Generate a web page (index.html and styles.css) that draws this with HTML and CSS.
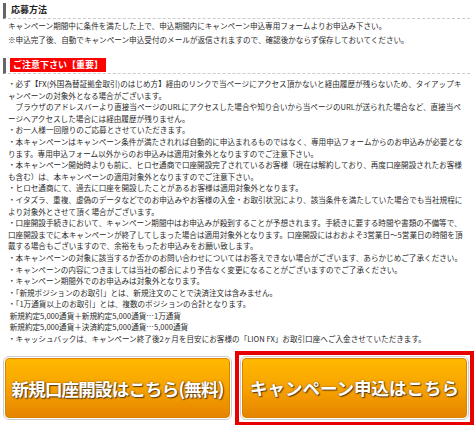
FILE: index.html
```html
<!DOCTYPE html>
<html lang="ja">
<head>
  <meta charset="UTF-8" />
  <title>キャンペーン 応募方法</title>
  <link rel="stylesheet" href="styles.css">
</head>
<body>

  <div class="section">
    <h3 class="ttl">応募方法</h3>
    <p class="lead">
      キャンペーン期間中に条件を満たした上で、申込期間内にキャンペーン申込専用フォームよりお申込み下さい。<br>
      ※申込完了後、自動でキャンペーン申込受付のメールが返信されますので、確認後かならず保存しておいてください。
    </p>
  </div>

  <div class="section">
    <h3 class="ttl"><span class="alert">ご注意下さい【重要】</span></h3>
    <ul class="notes">
      <li>・必ず【FX(外国為替証拠金取引)のはじめ方】経由のリンクで当ページにアクセス頂かないと経由履歴が残らないため、タイアップキ<br>ャンペーンの対象外となる場合がございます。<br>　ブラウザのアドレスバーより直接当ページのURLにアクセスした場合や知り合いから当ページのURLが送られた場合など、直接当ペ<br>ージへアクセスした場合には経由履歴が残りません。</li>
      <li>・お一人様一回限りのご応募とさせていただきます。</li>
      <li>・本キャンペーンはキャンペーン条件が満たされれば自動的に申込まれるものではなく、専用申込フォームからのお申込みが必要とな<br>ります。専用申込フォーム以外からのお申込みは適用対象外となりますのでご注意下さい。</li>
      <li>・本キャンペーン開始時よりも前に、ヒロセ通商で口座開設完了されているお客様（現在は解約しており、再度口座開設されたお客様<br>も含む）は、本キャンペーンの適用対象外となりますのでご注意下さい。</li>
      <li>・ヒロセ通商にて、過去に口座を開設したことがあるお客様は適用対象外となります。</li>
      <li>・イタズラ、重複、虚偽のデータなどでのお申込みやお客様の入金・お取引状況により、該当条件を満たしていた場合でも当社規程に<br>より対象外とさせて頂く場合がございます。</li>
      <li>・口座開設手続きにおいて、キャンペーン期間中はお申込みが殺到することが予想されます。手続きに要する時間や書類の不備等で、<br>口座開設までに本キャンペーンが終了してしまった場合は適用対象外となります。口座開設にはおおよそ3営業日～5営業日の時間を頂<br>戴する場合もございますので、余裕をもったお申込みをお願い致します。</li>
      <li>・本キャンペーンの対象に該当するか否かのお問い合わせについてはお答えできない場合がございます、あらかじめご了承ください。</li>
      <li>・キャンペーンの内容につきましては当社の都合により予告なく変更になることがございますのでご了承ください。</li>
      <li>・キャンペーン期間外でのお申込みは対象外となります。</li>
      <li>・「新規ポジションのお取引」とは、新規注文のことで決済注文は含みません。</li>
      <li>・「1万通貨以上のお取引」とは、複数のポジションの合計となります。<br>
        &nbsp;新規約定5,000通貨＋新規約定5,000通貨…1万通貨<br>
        &nbsp;新規約定5,000通貨＋決済約定5,000通貨…5,000通貨</li>
      <li>・キャッシュバックは、キャンペーン終了後2ヶ月を目安にお客様の「LION FX」お取引口座へご入金させていただきます。</li>
    </ul>
  </div>

  <div class="btns">
    <a class="btn-wrap" href="#">
      <span class="btn btn-open">新規口座開設はこちら(無料)</span>
    </a>
    <div class="btn-focus">
      <a class="btn-wrap" href="#">
        <span class="btn">キャンペーン申込はこちら</span>
      </a>
    </div>
  </div>

</body>
</html>
```

FILE: styles.css
```css
body {
  margin: 0;
  font-family: "Noto Sans CJK JP", "DejaVu Sans", sans-serif;
  font-size: 7.6px;
  color: #2a2a2a;
  background: #fff;
  overflow: hidden;
}

.section {
  padding: 0 4px 0 3px;
}

.ttl {
  margin: 3px 0 0;
  padding: 0 0 1px 5px;
  border-left: 3px solid #666;
  border-bottom: 1px dashed #ccc;
  font-size: 9px;
  line-height: 14px;
  font-weight: bold;
  color: #222;
}

.alert {
  display: inline-block;
  background: #f00;
  color: #fff;
  padding: 0 3px;
  margin-left: -1px;
}

.lead {
  margin: 0 0 12px 5px;
  line-height: 13.5px;
  white-space: nowrap;
}

.notes {
  list-style: none;
  margin: 4px 0 0 5px;
  padding: 0;
  line-height: 11.6px;
  white-space: nowrap;
}

.btns {
  display: flex;
  align-items: center;
  gap: 3px;
  margin-top: 6px;
  padding-left: 3px;
}

.btn-wrap {
  display: block;
  width: 229px;
  padding: 1px;
  border: 1px solid #ccc;
  border-radius: 6px;
  background: #fff;
  text-decoration: none;
  box-sizing: border-box;
}

.btn {
  display: flex;
  align-items: center;
  justify-content: center;
  height: 58px;
  border: 1px solid #d98300;
  border-radius: 4px;
  background: linear-gradient(#ffb900, #f7a300 50%, #e68400);
  color: #fff;
  font-size: 17.5px;
  font-weight: bold;
  text-shadow: 1px 1px 1px #5a3c12, 0 0 2px #7a5010;
  white-space: nowrap;
}

.btn-open {
  letter-spacing: -0.8px;
}

.btn-focus {
  border: 4px solid #e60000;
  padding: 1px 1px 2px;
}
```
